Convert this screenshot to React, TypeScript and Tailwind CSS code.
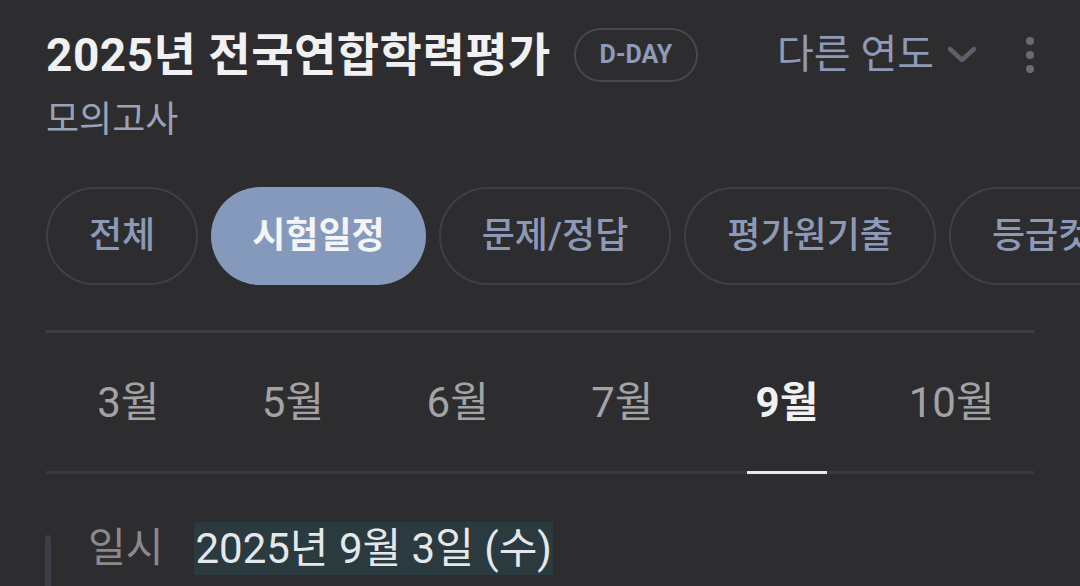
const font = { fontFamily: 'Roboto, "Noto Sans CJK KR", sans-serif' };

const categories = ["전체", "시험일정", "문제/정답", "평가원기출", "등급컷"];
const months = ["3월", "5월", "6월", "7월", "9월", "10월"];

export default function App() {
  return (
    <div
      className="w-[1080px] h-[586px] overflow-hidden bg-[#2d2d30] pl-[46px] pt-[26px]"
      style={font}
    >
      {/* header */}
      <div className="flex items-center pr-[46px] h-[58px]">
        <h1 className="text-[46px] font-bold text-[#f1f1f3] tracking-[0.5px] leading-none">
          2025년 전국연합학력평가
        </h1>
        <span className="ml-[23px] h-[54px] w-[124px] flex items-center justify-center rounded-full border-2 border-[#48484d] text-[25px] font-bold text-[#8d9bb8]">
          D-DAY
        </span>
        <div className="flex-1" />
        <button className="flex items-center gap-[12px] text-[40px] text-[#8e9ab6]">
          다른 연도
          <svg width="32" height="20" viewBox="0 0 32 20" fill="none">
            <path
              d="M4 4 L16 15 L28 4"
              stroke="#5d606b"
              strokeWidth="4.5"
              strokeLinecap="round"
              strokeLinejoin="round"
            />
          </svg>
        </button>
        <div className="ml-[48px] flex flex-col gap-[6px]">
          <span className="w-[8px] h-[8px] rounded-full bg-[#686c79]" />
          <span className="w-[8px] h-[8px] rounded-full bg-[#686c79]" />
          <span className="w-[8px] h-[8px] rounded-full bg-[#686c79]" />
        </div>
      </div>
      <p className="mt-[18px] text-[36px] leading-none text-[#9aa3b6]">모의고사</p>

      {/* category pills */}
      <div className="mt-[49px] flex gap-[13px] overflow-hidden">
        {categories.map((c, i) =>
          i === 1 ? (
            <div
              key={c}
              className="shrink-0 h-[98px] px-[41px] flex items-center rounded-full bg-[#8499bb] text-[36px] font-bold text-[#f4f5f8]"
            >
              {c}
            </div>
          ) : (
            <div
              key={c}
              className="shrink-0 h-[98px] px-[41px] flex items-center rounded-full border-2 border-[#3f4046] text-[36px] font-medium text-[#8d9ab7]"
            >
              {c}
            </div>
          )
        )}
      </div>

      {/* month tabs */}
      <div className="mt-[45px] w-[988px] border-t-[3px] border-[#3e3e48]">
        <div className="grid grid-cols-6 h-[141px] border-b-[3px] border-[#3a3a3d]">
          {months.map((m, i) => (
            <div key={m} className="relative flex items-center justify-center">
              <span
                className={
                  i === 4
                    ? "text-[42px] font-bold text-[#f1f1f3]"
                    : "text-[42px] text-[#a3a3a6]"
                }
              >
                {m}
              </span>
              {i === 4 && (
                <span className="absolute bottom-[-3px] left-1/2 -translate-x-1/2 w-[80px] h-[3px] bg-[#e8e8ea]" />
              )}
            </div>
          ))}
        </div>
      </div>

      {/* detail */}
      <div className="mt-[48px] flex items-start">
        <span className="mt-[13px] w-[6px] h-[80px] rounded-t-full bg-[#3a3f47] -ml-[1px]" />
        <span className="ml-[37px] text-[41px] text-[#8a8a8d] leading-[53px]">일시</span>
        <span className="ml-[31px] px-[1px] text-[42px] text-[#e4e8ec] leading-[53px] bg-[#2a3a3e]">
          2025년 9월 3일 (수)
        </span>
      </div>
    </div>
  );
}
